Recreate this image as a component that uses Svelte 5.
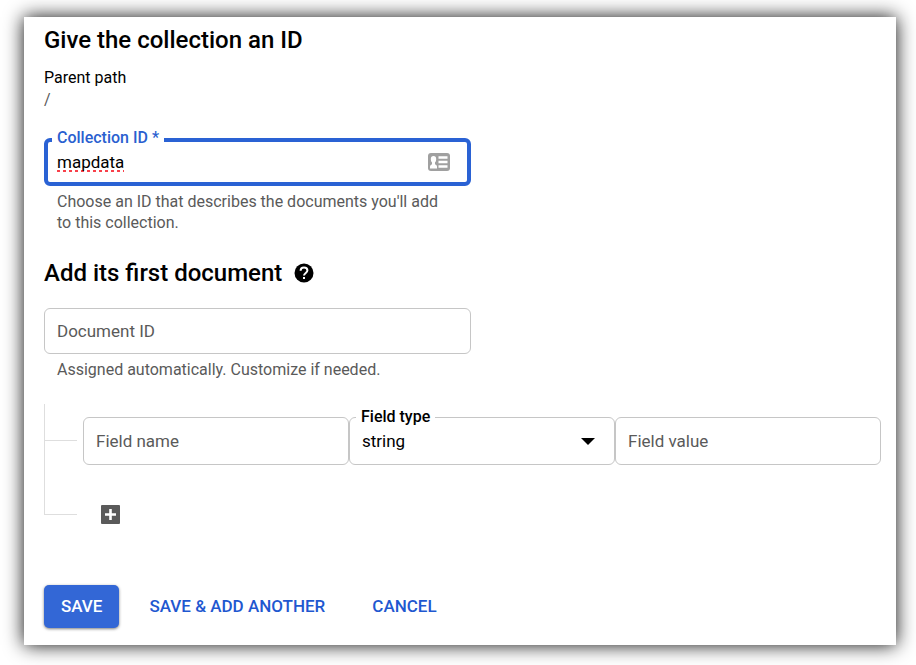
<script>
  let collectionId = $state('mapdata');
  let documentId = $state('');
  let fieldName = $state('');
  let fieldType = $state('string');
  let fieldValue = $state('');
  const types = ['string', 'number', 'boolean', 'map', 'array', 'null', 'timestamp', 'geopoint', 'reference'];
</script>

<form class="panel" onsubmit={(e) => e.preventDefault()}>
  <section>
    <h2>Give the collection an ID</h2>
    <dl>
      <dt>Parent path</dt>
      <dd>/</dd>
    </dl>
    <div class="narrow">
      <div class="field focused">
        <label class="notch" for="collection">Collection ID *</label>
        <input id="collection" class="misspelt" type="text" spellcheck="false" autocomplete="off" aria-describedby="collection-help" bind:value={collectionId} />
        <svg class="card" width="22" height="18" viewBox="0 0 22 18" aria-hidden="true">
          <rect width="22" height="18" rx="3" fill="#a0a0a0" />
          <path d="M2 15.500V13.500Q2 12 4 11.200V9.600Q2.800 8.400 2.800 6.200Q2.800 3 5.500 3T8.200 6.200Q8.200 8.400 7 9.600V11.200Q9 12 9 13.500V15.500Z" fill="#fff" />
          <path d="M10.500 4.500H19.500M10.500 9H19.500M10.500 13.500H19.500" stroke="#fff" stroke-width="2.400" />
        </svg>
      </div>
      <p id="collection-help" class="help">Choose an ID that describes the documents you'll add to this collection.</p>
    </div>
  </section>

  <section>
    <div class="title">
      <h2>Add its first document</h2>
      <button class="icon" type="button" aria-label="Help">
        <svg width="20" height="20" viewBox="0 0 20 20" aria-hidden="true">
          <circle cx="10" cy="10" r="9.500" fill="#000" />
          <path d="M6.600 7.800C6.600 5.700 8 4.400 10 4.400S13.400 5.700 13.400 7.600C13.400 9.900 10 10 10 12.600" fill="none" stroke="#fff" stroke-width="2" />
          <rect x="9" y="14" width="2" height="2" fill="#fff" />
        </svg>
      </button>
    </div>
    <div class="narrow">
      <div class="field">
        <input type="text" aria-label="Document ID" placeholder="Document ID" autocomplete="off" bind:value={documentId} />
      </div>
      <p class="help">Assigned automatically. Customize if needed.</p>
    </div>
  </section>

  <div class="tree">
    <div class="branch first">
      <div class="row">
        <div class="field">
          <input type="text" aria-label="Field name" placeholder="Field name" autocomplete="off" bind:value={fieldName} />
        </div>
        <div class="field">
          <label class="notch" for="type">Field type</label>
          <select id="type" bind:value={fieldType}>
            {#each types as type}
              <option>{type}</option>
            {/each}
          </select>
          <svg class="arrow" width="14" height="7" viewBox="0 0 14 7" aria-hidden="true"><path d="M0 0H14L7 7Z" /></svg>
        </div>
        <div class="field">
          <input type="text" aria-label="Field value" placeholder="Field value" autocomplete="off" bind:value={fieldValue} />
        </div>
      </div>
    </div>
    <div class="branch last">
      <button class="icon add" type="button" aria-label="Add field">
        <svg width="19" height="19" viewBox="0 0 19 19" aria-hidden="true">
          <rect width="19" height="19" rx="1" fill="#5a5a5a" />
          <path d="M9.500 4V15M4 9.500H15" stroke="#fff" stroke-width="2.600" />
        </svg>
      </button>
    </div>
  </div>

  <div class="actions">
    <button class="primary" type="submit">SAVE</button>
    <button type="button">SAVE &amp; ADD ANOTHER</button>
    <button type="button">CANCEL</button>
  </div>
</form>

<style>
  :global(body) {
    background: #fff;
  }
  .panel,
  .panel * {
    box-sizing: border-box;
  }
  .panel {
    margin: 17px 20px 20px 24px;
    padding: 9px 15px 17px 20px;
    background: #fff;
    box-shadow: 0 0 18px rgba(0, 0, 0, 0.95);
    font: 16px/22px Roboto, "Liberation Sans", sans-serif;
    color: #000;
  }
  h2 {
    margin: 0;
    font-size: 24px;
    line-height: 28px;
    font-weight: 500;
  }
  dl {
    margin: 13px 0 27px;
  }
  dd {
    margin: 0;
    color: #5a5a5a;
  }
  .narrow {
    max-width: 427px;
  }
  .field {
    position: relative;
    display: flex;
    align-items: center;
    height: 46px;
    border: 1px solid #c6c6c6;
    border-radius: 6px;
  }
  .focused {
    height: 48px;
    border: 4px solid #2a62d4;
  }
  input,
  select {
    flex: 1;
    min-width: 0;
    width: 100%;
    height: 100%;
    padding: 0 12px;
    border: 0;
    outline: 0;
    background: transparent;
    color: #000;
    font: inherit;
    font-size: 17px;
    appearance: none;
  }
  .focused input {
    padding: 0 9px;
    line-height: 32px;
  }
  input::placeholder {
    color: #5a5a5a;
    opacity: 1;
  }
  .misspelt {
    text-decoration-line: underline;
    text-decoration-style: dotted;
    text-decoration-color: #f8404a;
    text-decoration-thickness: 3px;
    text-underline-offset: 2px;
    text-decoration-skip-ink: none;
  }
  .notch {
    position: absolute;
    top: -11px;
    left: 6px;
    padding: 0 5px;
    background: #fff;
    font-weight: 500;
    line-height: 20px;
  }
  .focused .notch {
    top: -14px;
    left: 4px;
    color: #2a5fd0;
  }
  .card {
    flex: none;
    margin-right: 17px;
  }
  .arrow {
    position: absolute;
    right: 19px;
    pointer-events: none;
  }
  .help {
    margin: 5px 26px 0 13px;
    line-height: 21px;
    color: #5a5a5a;
  }
  .title {
    display: flex;
    align-items: center;
    gap: 12px;
    margin: 26px 0 21px;
  }
  .icon {
    display: flex;
    padding: 0;
    border: 0;
    background: none;
    cursor: pointer;
  }
  .tree {
    margin-top: 24px;
    border-left: 1px solid #dedede;
  }
  .branch::before {
    content: "";
    flex: none;
    width: 32px;
    height: 1px;
    background: #dedede;
  }
  .branch {
    display: flex;
    align-items: center;
    gap: 6px;
  }
  .first {
    padding-top: 13px;
  }
  .first::before {
    margin-bottom: 2px;
  }
  .row {
    flex: 1;
    display: grid;
    grid-template-columns: repeat(3, 1fr);
  }
  .row .field {
    height: 48px;
  }
  .last {
    align-items: flex-end;
    height: 50px;
  }
  .add {
    margin: 0 18px -9px;
  }
  .actions {
    display: flex;
    gap: 13px;
    margin-top: 70px;
  }
  .actions button {
    height: 43px;
    padding: 0 17px 2px;
    border: 0;
    border-radius: 5px;
    background: none;
    color: #1f58d0;
    font: inherit;
    font-size: 17px;
    font-weight: 500;
    cursor: pointer;
  }
  .actions .primary {
    background: #3367d6;
    color: #fff;
    box-shadow: 0 1px 3px rgba(0, 0, 0, 0.5);
  }
</style>
